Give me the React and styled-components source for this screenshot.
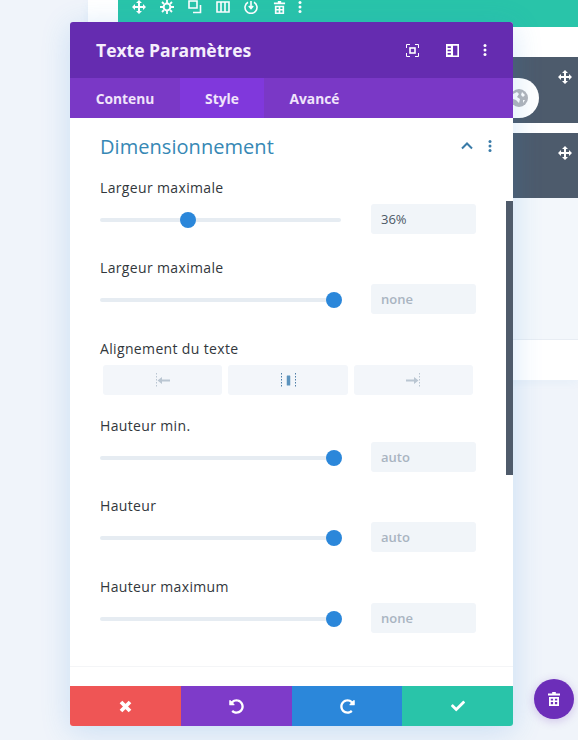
import React from 'react';
import styled, { createGlobalStyle } from 'styled-components';
import { FaCheck, FaRedoAlt, FaUndoAlt } from 'react-icons/fa';

const GlobalStyle = createGlobalStyle`
  html, body {
    margin: 0;
    padding: 0;
    height: 740px;
    overflow: hidden;
    background: #f0f4fa;
    font-family: "Open Sans", "Liberation Sans", sans-serif;
  }
`;

const Page = styled.div`
  position: relative;
  width: 578px;
  height: 740px;
  overflow: hidden;
  padding-left: 88px;
  box-sizing: border-box;
  background: #f0f4fa;
`;
const Section = styled.div`
  display: flex;
  flex-direction: column;
  height: 380px;
  background: #fff;
  box-shadow: 0 2px 10px rgba(43, 135, 218, 0.05);
`;
const TealBar = styled.div`
  display: flex;
  align-items: center;
  gap: 14px;
  height: 27px;
  flex: none;
  margin-left: 30px;
  padding: 0 0 13px 14px;
  box-sizing: border-box;
  background: #29c4a9;
  color: #fff;
`;
const ToolIcon = styled.span`
  display: flex;
  justify-content: center;
  width: 14px;
  flex: none;
  margin-right: ${p => p.$tight ? '-7px' : '0'};
`;
const Rows = styled.div`
  display: flex;
  flex-direction: column;
  gap: 10px;
  flex: none;
  margin: 30px 0 0 425px;
`;
const DarkRow = styled.div`
  position: relative;
  display: flex;
  justify-content: flex-end;
  height: ${p => p.$h}px;
  padding: ${p => p.$top}px 6px 0 0;
  box-sizing: border-box;
  background: #4d5b6c;
  color: #fff;
`;
const GlobeBadge = styled.div`
  position: absolute;
  left: -22px;
  top: 21px;
  display: flex;
  align-items: center;
  justify-content: center;
  width: 48px;
  height: 40px;
  padding-left: 8px;
  box-sizing: border-box;
  border-radius: 20px;
  background: #fff;
`;
const LightFill = styled.div`
  flex: 1;
  background: #f3f7fb;
  border-bottom: 1px solid #e8edf3;
`;
const Strip = styled.div`
  height: 40px;
  flex: none;
  background: #fff;
`;

const Modal = styled.div`
  position: absolute;
  left: 70px;
  top: 22px;
  display: flex;
  flex-direction: column;
  width: 443px;
  height: 704px;
  border-radius: 3px;
  overflow: hidden;
  background: #fff;
  box-shadow: 0 5px 30px rgba(43, 135, 218, 0.2);
`;
const Header = styled.div`
  display: flex;
  align-items: center;
  height: 56px;
  padding: 0 26px 0 26px;
  flex: none;
  background: #652cb0;
  color: #fff;
`;
const Title = styled.h1`
  flex: 1;
  margin: 0;
  font-size: 17.5px;
  font-weight: 700;
  color: #f5eefc;
`;
const HeadIcons = styled.div`
  display: flex;
  align-items: center;
  gap: 27px;
`;
const HeadDots = styled.span`
  display: flex;
  margin-left: -3px;
`;
const Tabs = styled.div`
  display: flex;
  height: 40px;
  flex: none;
  background: #7a38c6;
`;
const Tab = styled.div`
  display: flex;
  align-items: center;
  justify-content: center;
  width: ${p => p.$w}px;
  font-size: 13.8px;
  font-weight: 700;
  color: #f0e4fb;
  background: ${p => p.$active ? '#8038dc' : 'transparent'};
`;
const Body = styled.div`
  position: relative;
  flex: 1;
  padding: 0 37px 0 30px;
`;
const Scrollbar = styled.div`
  position: absolute;
  right: 0;
  top: 83px;
  width: 7px;
  height: 274px;
  background: #4f5b6b;
`;
const GroupHead = styled.div`
  display: flex;
  align-items: center;
  height: 56px;
  padding-bottom: 2px;
  margin-right: -16px;
  color: #3a7ba8;
`;
const GroupTitle = styled.h2`
  flex: 1;
  margin: 0;
  font-size: 20px;
  font-weight: 400;
  letter-spacing: 0.05px;
  color: #3688b5;
`;
const GroupIcons = styled.div`
  display: flex;
  align-items: center;
  gap: 15px;
`;
const Field = styled.div`
  display: flex;
  flex-direction: column;
  gap: 6px;
  margin-top: ${p => p.$mt}px;
`;
const Label = styled.div`
  height: 20px;
  font-size: 14px;
  line-height: 20px;
  letter-spacing: 0.35px;
  color: #32373c;
`;
const SliderRow = styled.div`
  display: flex;
  align-items: center;
  justify-content: space-between;
  height: 30px;
`;
const Track = styled.div`
  position: relative;
  width: 241px;
  height: 4px;
  margin-top: 2px;
  border-radius: 2px;
  background: #e6ecf2;
`;
const Thumb = styled.div`
  position: absolute;
  top: -6px;
  width: 16px;
  height: 16px;
  margin-left: -8px;
  border-radius: 50%;
  background: #2b87da;
`;
const ValueBox = styled.div`
  display: flex;
  align-items: center;
  width: 105px;
  height: 30px;
  padding-left: 10px;
  box-sizing: border-box;
  border-radius: 3px;
  font-size: 13px;
  font-weight: ${p => p.$set ? 400 : 600};
  color: ${p => p.$set ? '#4c5866' : '#a9b4c1'};
  background: #f1f5f9;
`;
const AlignRow = styled.div`
  display: grid;
  grid-template-columns: 119px 120px 119px;
  gap: 6px;
  margin-left: 3px;
`;
const AlignButton = styled.div`
  display: flex;
  align-items: center;
  justify-content: center;
  height: 30px;
  border-radius: 3px;
  background: #f3f6fa;
`;
const Divider = styled.div`
  position: absolute;
  left: 0;
  right: 0;
  bottom: 19px;
  border-top: 1px solid #f4f5f7;
`;
const Footer = styled.div`
  display: grid;
  grid-template-columns: 111px 111px 110px 111px;
  height: 40px;
  flex: none;
`;
const FootButton = styled.div`
  display: flex;
  align-items: center;
  justify-content: center;
  background: ${p => p.$bg};
  color: #fff;
  font-size: 15px;
`;
const TrashFab = styled.div`
  position: absolute;
  left: 534px;
  top: 679px;
  display: flex;
  align-items: center;
  justify-content: center;
  width: 40px;
  height: 40px;
  border-radius: 50%;
  background: #6c2eb9;
  color: #fff;
  box-shadow: 0 2px 10px rgba(108, 46, 185, 0.25);
`;

const MoveIcon = ({ size = 14 }) => (
  <svg width={size} height={size} viewBox="0 0 14 14" fill="currentColor">
    <path d="M7 0l3 3H8v3h3V4l3 3-3 3V8H8v3h2l-3 3-3-3h2V8H3v2L0 7l3-3v2h3V3H4z" />
  </svg>
);

const GearIcon = () => (
  <svg width="14" height="14" viewBox="0 0 14 14" fill="none" stroke="currentColor">
    <circle cx="7" cy="7" r="3.4" strokeWidth="2" />
    <path d="M7 0v3M7 11v3M0 7h3M11 7h3M2 2l2 2M10 10l2 2M12 2l-2 2M4 10l-2 2" strokeWidth="1.8" />
  </svg>
);

const CopyIcon = () => (
  <svg width="14" height="14" viewBox="0 0 14 14" fill="none" stroke="currentColor" strokeWidth="1.6">
    <path d="M1 1h8v7H1z" />
    <path d="M12.5 5v7.5H5" />
  </svg>
);

const ColumnsIcon = () => (
  <svg width="14" height="14" viewBox="0 0 14 14" fill="none" stroke="currentColor" strokeWidth="1.6">
    <path d="M1 2h12v10H1zM5 2v10M9 2v10" />
  </svg>
);

const SaveIcon = () => (
  <svg width="14" height="14" viewBox="0 0 14 14" fill="none" stroke="currentColor" strokeWidth="1.6">
    <path d="M4 2.2a6 6 0 1 0 6 0" />
    <path d="M7 1v7M4.8 6L7 8.5 9.2 6" />
  </svg>
);

const TrashIcon = ({ size = 14 }) => (
  <svg width={size} height={size} viewBox="0 0 14 14" fill="currentColor">
    <path d="M5.2 0h3.6v1.6H13v1.8H1V1.6h4.2zM2 5h10v9H2zm1.8 1.7v1.9h2.3V6.7zm4.1 0v1.9h2.3V6.7zm-4.1 3.4v2.2h2.3v-2.2zm4.1 0v2.2h2.3v-2.2z" fillRule="evenodd" />
  </svg>
);

const DotsIcon = ({ h = 12 }) => (
  <svg width="4" height={h} viewBox="0 0 4 12" fill="currentColor">
    <circle cx="2" cy="1.6" r="1.5" />
    <circle cx="2" cy="6" r="1.5" />
    <circle cx="2" cy="10.4" r="1.5" />
  </svg>
);

const FocusIcon = () => (
  <svg width="13" height="13" viewBox="0 0 13 13" fill="none" stroke="currentColor" strokeWidth="1">
    <path d="M4 .5H.5V4M9 .5h3.5V4M4 12.5H.5V9M9 12.5h3.5V9" />
    <rect x="4" y="4" width="5" height="5" strokeWidth="1.6" />
  </svg>
);

const SplitIcon = () => (
  <svg width="13" height="13" viewBox="0 0 12 12" fill="currentColor">
    <path d="M0 0h12v12H0zM6.5 1.5v9h4v-9zM1.5 2v1.6h3V2zm0 3.2v1.6h3V5.2zm0 3.2V10h3V8.400z" fillRule="evenodd" />
  </svg>
);

const Chevron = () => (
  <svg width="12" height="8" viewBox="0 0 12 8" fill="none" stroke="currentColor" strokeWidth="2">
    <path d="M1 6.5l5-5 5 5" />
  </svg>
);

const CrossIcon = () => (
  <svg width="13" height="13" viewBox="0 0 13 13" fill="none" stroke="currentColor" strokeWidth="3.8">
    <path d="M2 2l9 9M11 2l-9 9" />
  </svg>
);

const GlobeIcon = () => (
  <svg width="18" height="18" viewBox="0 0 18 18">
    <circle cx="9" cy="9" r="9" fill="#b3b5ba" />
    <path d="M3 5l4-2 2 2-2 3 3 2-1 4-3-3-3-1zM12 3l3 3-2 2-2-2zM13 11l2 0-2 3z" fill="#fff" />
  </svg>
);

const AlignIcon = ({ kind }) => {
  const active = kind === 'center';
  const color = active ? '#5c93bd' : '#bac6d2';
  return (
    <svg width="17" height="15" viewBox="0 0 17 15" fill={color} stroke="none">
      {kind === 'left' && (
        <>
          <path d="M2.5 0v15" stroke={color} strokeDasharray="1.5 1.5" />
          <path d="M3.5 7.5L8 4v2.500h8v2H8V11z" />
        </>
      )}
      {kind === 'center' && (
        <>
          <path d="M1.5 0v15M15.5 0v15" stroke="#4f7fa8" strokeDasharray="1.5 1.5" />
          <rect x="6.75" y="2.5" width="3.5" height="10" rx="0.5" />
        </>
      )}
      {kind === 'right' && (
        <>
          <path d="M14.5 0v15" stroke={color} strokeDasharray="1.5 1.5" />
          <path d="M13.5 7.5L9 4v2.500H1v2h8V11z" />
        </>
      )}
    </svg>
  );
};

const SliderField = ({ label, pos, value, set, mt }) => (
  <Field $mt={mt}>
    <Label>{label}</Label>
    <SliderRow>
      <Track>
        <Thumb style={{ left: `${pos}%` }} />
      </Track>
      <ValueBox $set={set}>{value}</ValueBox>
    </SliderRow>
  </Field>
);

const App = () => (
  <Page>
    <GlobalStyle />
    <Section>
      <TealBar>
        <ToolIcon><MoveIcon /></ToolIcon>
        <ToolIcon><GearIcon /></ToolIcon>
        <ToolIcon><CopyIcon /></ToolIcon>
        <ToolIcon><ColumnsIcon /></ToolIcon>
        <ToolIcon><SaveIcon /></ToolIcon>
        <ToolIcon $tight><TrashIcon size={13} /></ToolIcon>
        <ToolIcon><DotsIcon /></ToolIcon>
      </TealBar>
      <Rows>
        <DarkRow $h={66} $top={13}>
          <MoveIcon />
          <GlobeBadge><GlobeIcon /></GlobeBadge>
        </DarkRow>
        <DarkRow $h={65} $top={13}>
          <MoveIcon />
        </DarkRow>
      </Rows>
      <LightFill />
      <Strip />
    </Section>

    <Modal>
      <Header>
        <Title>Texte Paramètres</Title>
        <HeadIcons>
          <FocusIcon />
          <SplitIcon />
          <HeadDots><DotsIcon /></HeadDots>
        </HeadIcons>
      </Header>
      <Tabs>
        <Tab $w={110}>Contenu</Tab>
        <Tab $w={84} $active>Style</Tab>
        <Tab $w={101}>Avancé</Tab>
      </Tabs>
      <Body>
        <GroupHead>
          <GroupTitle>Dimensionnement</GroupTitle>
          <GroupIcons>
            <Chevron />
            <DotsIcon />
          </GroupIcons>
        </GroupHead>
        <SliderField label="Largeur maximale" pos={36.5} value="36%" set mt={2} />
        <SliderField label="Largeur maximale" pos={97} value="none" mt={24} />
        <Field $mt={25}>
          <Label>Alignement du texte</Label>
          <AlignRow>
            <AlignButton><AlignIcon kind="left" /></AlignButton>
            <AlignButton><AlignIcon kind="center" /></AlignButton>
            <AlignButton><AlignIcon kind="right" /></AlignButton>
          </AlignRow>
        </Field>
        <SliderField label="Hauteur min." pos={97} value="auto" mt={21} />
        <SliderField label="Hauteur" pos={97} value="auto" mt={24} />
        <SliderField label="Hauteur maximum" pos={97} value="none" mt={25} />
        <Divider />
        <Scrollbar />
      </Body>
      <Footer>
        <FootButton $bg="#ef5555"><CrossIcon /></FootButton>
        <FootButton $bg="#7e3bc9"><FaUndoAlt /></FootButton>
        <FootButton $bg="#2b87da"><FaRedoAlt /></FootButton>
        <FootButton $bg="#29c4a9"><FaCheck size={14} /></FootButton>
      </Footer>
    </Modal>

    <TrashFab><TrashIcon /></TrashFab>
  </Page>
);

export default App;
